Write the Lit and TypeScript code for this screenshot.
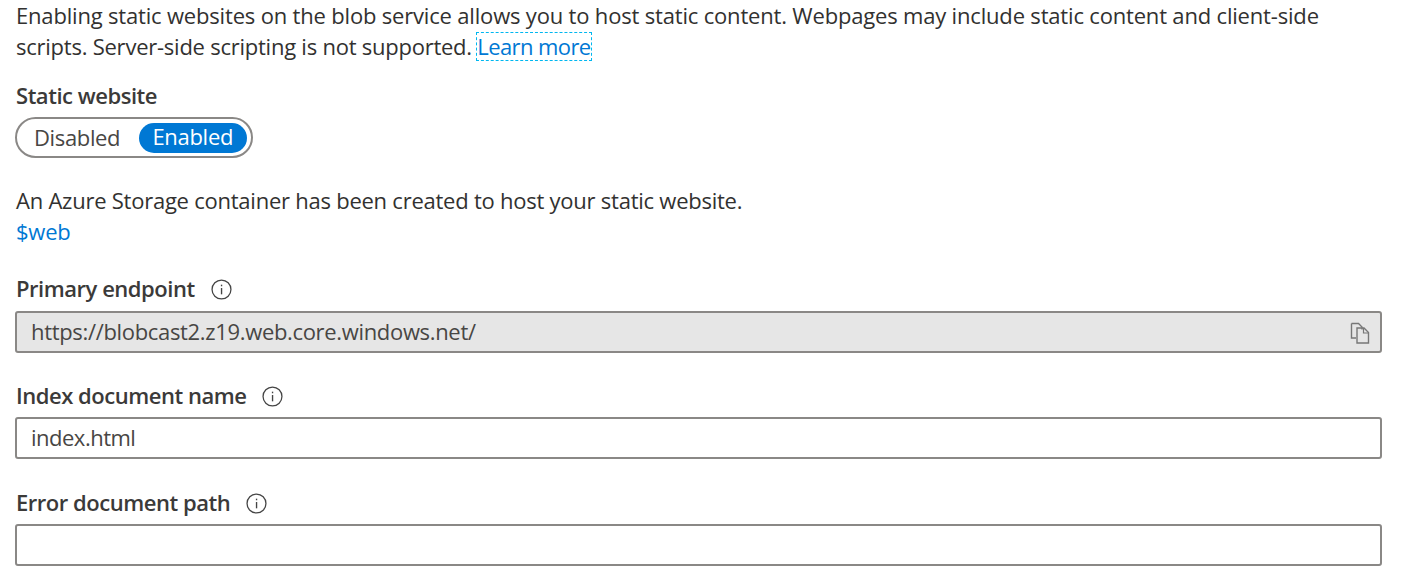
import { LitElement, html, css, svg } from "lit";
import { customElement } from "lit/decorators.js";

const info = html`<svg class="info" width="21" height="21" viewBox="0 0 20 20" fill="none">
  <circle cx="10" cy="10" r="9" stroke="#444" stroke-width="1.2"/>
  <rect x="9.4" y="8.6" width="1.3" height="6" fill="#444"/>
  <rect x="9.4" y="5.4" width="1.3" height="1.5" fill="#444"/>
</svg>`;

const copy = svg`<path d="M1.5 1H8.5L12 4.5V7M6 15.5H1.5V1" stroke="#777" stroke-width="1.4" fill="none"/>
<path d="M7 5.5H14L18.5 10V20.5H7Z" stroke="#777" stroke-width="1.4" fill="none"/>
<path d="M13.5 5.5V10.5H18.5" stroke="#777" stroke-width="1.2" fill="none"/>`;

@customElement("app-root")
export class AppRoot extends LitElement {
  static styles = css`
    :host {
      display: block;
      height: 582px;
      overflow: hidden;
      background: #fff;
      font-family: "Open Sans", "Noto Sans", sans-serif;
      font-size: 22px;
      color: #323130;
    }
    .page {
      display: flex;
      flex-direction: column;
      padding: 0 20px 0 16px;
    }
    .intro {
      margin: 0;
      line-height: 31px;
      letter-spacing: -0.18px;
      white-space: nowrap;
    }
    .tight {
      letter-spacing: -0.24px;
    }
    a {
      color: #0078d4;
      text-decoration: none;
    }
    .learn {
      outline: 1px dashed #00b7f0;
      display: inline-block;
      line-height: 27px;
      letter-spacing: -0.6px;
    }
    .label {
      display: flex;
      align-items: center;
      gap: 16px;
      font-weight: 600;
      color: #3b3a39;
      line-height: 28px;
      margin-bottom: 2px;
      letter-spacing: -0.47px;
    }
    .static-label {
      margin-top: 19px;
    }
    .toggle {
      box-sizing: border-box;
      display: flex;
      align-items: center;
      width: 238px;
      height: 41px;
      margin: 6px 0 0 -1px;
      padding: 0 4px 0 18px;
      border: 2px solid #8a8886;
      border-radius: 21px;
      letter-spacing: -0.36px;
    }
    .off {
      width: 104px;
      padding-bottom: 2px;
      margin-left: -1px;
      margin-right: 1px;
      color: #484644;
    }
    .on {
      box-sizing: border-box;
      width: 109px;
      height: 30px;
      line-height: 27px;
      text-align: center;
      background: #0078d4;
      color: #fff;
      border-radius: 15px;
      letter-spacing: -0.3px;
    }
    .created {
      margin: 27px 0 0;
      line-height: 31px;
      letter-spacing: -0.24px;
    }
    .first {
      margin-top: 27px;
    }
    .second {
      margin-top: 28px;
    }
    .third {
      margin-top: 29px;
    }
    .input {
      box-sizing: border-box;
      display: flex;
      align-items: center;
      justify-content: space-between;
      width: 1367px;
      height: 42px;
      margin: 6px 0 0 -1px;
      padding: 0 10px 2px 14px;
      border: 2px solid #8a8886;
      border-radius: 3px;
      letter-spacing: -0.5px;
      color: #484644;
      white-space: nowrap;
    }
    .input.ro {
      margin-top: 7px;
      background: #e6e6e6;
      letter-spacing: -0.33px;
    }
    .input svg {
      margin-top: 5px;
    }
    .info {
      flex: none;
      margin-top: 2px;
    }
  `;

  render() {
    return html`<div class="page">
      <p class="intro">Enabling static websites on the blob service allows you to host static content. Webpages may include static content and client-side<br /><span class="tight">scripts. Server-side scripting is not supported. </span><a class="learn" href="#">Learn more</a></p>
      <div class="label static-label">Static website</div>
      <div class="toggle"><span class="off">Disabled</span><span class="on">Enabled</span></div>
      <p class="created">An Azure Storage container has been created to host your static website.<br /><a href="#">$web</a></p>
      <div class="label first">Primary endpoint ${info}</div>
      <div class="input ro">https://blobcast2.z19.web.core.windows.net/<svg width="20" height="23" viewBox="0 0 20 22">${copy}</svg></div>
      <div class="label second">Index document name ${info}</div>
      <div class="input">index.html</div>
      <div class="label third">Error document path ${info}</div>
      <div class="input"></div>
    </div>`;
  }
}
